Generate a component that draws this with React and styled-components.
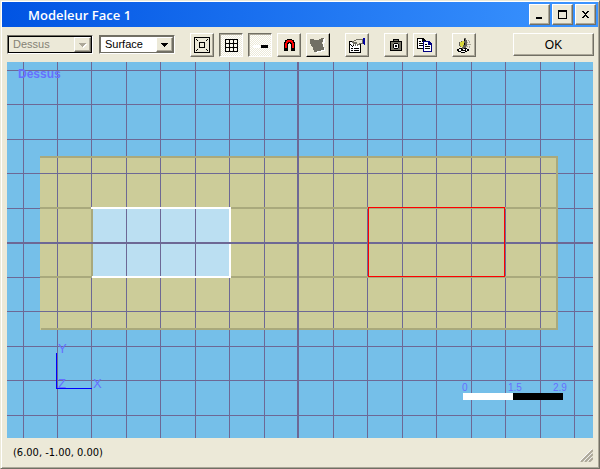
import React from 'react';
import styled, { createGlobalStyle, css } from 'styled-components';

const Global = createGlobalStyle`
  * { box-sizing: border-box; }
  html, body, #root { height: 100%; margin: 0; }
  body { background: #fff; font: 11px/14px "Liberation Sans", Arial, sans-serif; color: #000; overflow: hidden; }
`;

const raised = css`
  border: 1px solid;
  border-color: #fff #716f64 #716f64 #fff;
  box-shadow: inset -1px -1px #aca899;
`;

const Window = styled.main`
  display: flex;
  flex-direction: column;
  min-height: 100vh;
  background: #ece9d8;
  border: 1px solid;
  border-color: #ece9d8 #716f64 #716f64 #ece9d8;
  box-shadow: inset 1px 1px #fff, inset -1px -1px #aca899;
  padding: 1px;
`;

const TitleBar = styled.header`
  display: flex;
  align-items: center;
  height: 25px;
  padding: 0 2px 0 26px;
  background: linear-gradient(to right, #0054e3, #3c95ff);
`;

const Title = styled.h1`
  flex: 1;
  margin: 0;
  color: #fff;
  font: 600 13px/16px "Open Sans", "Noto Sans", sans-serif;
`;

const CaptionButtons = styled.div`
  display: flex;
  gap: 2px;
`;

const CaptionButton = styled.button`
  ${raised}
  width: 21px;
  height: 21px;
  padding: 0;
  background: #ece9d8;
  svg { display: block; margin: auto; }
`;

const Toolbar = styled.div`
  display: flex;
  align-items: center;
  justify-content: space-between;
  height: 35px;
  padding: 0 4px 0 5px;
`;

const Tools = styled.div`
  display: flex;
  align-items: center;
  gap: 15px;
`;

const Group = styled.div`
  display: flex;
  gap: ${p => p.$gap || 5}px;
`;

const Combo = styled.div`
  display: grid;
  grid-template-columns: 1fr 17px;
  width: ${p => p.$width}px;
  height: 19px;
  border: 1px solid;
  border-color: #716f64 #fff #fff #716f64;
  box-shadow: inset 1px 1px ${p => (p.$off ? '#000' : '#716f64')}, inset -1px -1px ${p => (p.$off ? '#000' : '#716f64')};
  padding: 1px;
  background: ${p => (p.$off ? '#ece9d8' : '#fff')};
`;

const Select = styled.select`
  grid-area: 1 / 1 / 2 / 3;
  appearance: none;
  min-width: 0;
  border: 0;
  padding: 0 18px 0 4px;
  background: transparent;
  color: #000;
  font: 11px/15px "Liberation Sans", Arial, sans-serif;
  &:disabled { color: #858274; opacity: 1; }
`;

const Drop = styled.span`
  ${raised}
  grid-area: 1 / 2;
  display: grid;
  place-items: center;
  background: #ece9d8;
  pointer-events: none;
`;

const ToolButton = styled.button`
  ${raised}
  display: grid;
  place-items: center;
  width: 24px;
  height: 24px;
  padding: 0;
  background: #ece9d8;
  ${p => p.$dark && css`
    border-color: #fff #000 #000 #fff;
  `}
  ${p => p.$pressed && css`
    border-color: #716f64 #fff #fff #716f64;
    box-shadow: inset 1px 1px #aca899;
    background: repeating-conic-gradient(#fff 0 25%, #ece9d8 0 50%) 0 0 / 2px 2px;
  `}
`;

const OkButton = styled.button`
  ${raised}
  width: 81px;
  height: 23px;
  padding: 0;
  background: #ece9d8;
  font: 12px/16px "Liberation Sans", Arial, sans-serif;
`;

const Viewport = styled.section`
  flex: 1;
  display: grid;
  min-height: 0;
  margin: 0 5px;
  background: #75bfe9;
`;

const Drawing = styled.svg`
  display: block;
  width: 100%;
  height: 100%;
  shape-rendering: crispEdges;
  text { font-family: "Liberation Sans", Arial, sans-serif; fill: #6670ff; }
`;

const StatusBar = styled.footer`
  display: flex;
  align-items: center;
  justify-content: space-between;
  height: 29px;
  padding: 0 5px 0 11px;
  font: 11px/14px "DejaVu Sans Condensed", "DejaVu Sans", sans-serif;
`;

const Grip = styled.svg`
  align-self: flex-end;
  margin-bottom: 5px;
`;

const Icon = ({ children, size = 16 }) => (
  <svg width={size} height={size} viewBox={`0 0 ${size} ${size}`} shapeRendering="crispEdges" aria-hidden="true">{children}</svg>
);

const Arrow = ({ off }) => (
  <Icon size={9}>
    {off && <path d="M2 4h7v1h-1v1h-1v1h-1v1h-1v-1h-1v-1h-1v-1h-1z" fill="#fff" />}
    <path d="M1 3h7v1h-1v1h-1v1h-1v1h-1v-1h-1v-1h-1v-1h-1z" fill={off ? '#aca899' : '#000'} />
  </Icon>
);

const FitIcon = () => (
  <Icon>
    <path d="M0 0h16v16h-16zM1 1v14h14v-14zM5 5h6v6h-6zM6 6v4h4v-4z" fillRule="evenodd" />
    <path d="M2 2h1v1h-1zM3 3h1v1h-1zM13 2h1v1h-1zM12 3h1v1h-1zM2 13h1v1h-1zM3 12h1v1h-1zM13 13h1v1h-1zM12 12h1v1h-1z" />
  </Icon>
);

const GridIcon = () => (
  <Icon>
    <path d="M2 2h13v13h-13zM3 3v3h3v-3zM7 3v3h3v-3zM11 3v3h3v-3zM3 7v3h3v-3zM7 7v3h3v-3zM11 7v3h3v-3zM3 11v3h3v-3zM7 11v3h3v-3zM11 11v3h3v-3z" fillRule="evenodd" />
  </Icon>
);

const ScaleIcon = () => (
  <Icon>
    <path d="M1 8h7v3h-7z" fill="#fff" />
    <path d="M9 8h7v3h-7z" />
  </Icon>
);

const MagnetIcon = () => (
  <Icon>
    <path d="M6 2h5v1h2v2h1v9h-4v-7h-1v-1h-1v1h-1v7h-4v-9h1v-2h2z" />
    <path d="M6 3h5v1h1v2h1v5h-2v-5h-1v-1h-3v1h-1v5h-2v-5h1v-2h1z" fill="#f00" />
  </Icon>
);

const ShapeIcon = () => (
  <Icon>
    <path d="M13 1h2v5h-1v5h1v3h-3v1h-4v1h-2v-3h7z" fill="#fff" />
    <path d="M2 2h2v1h5v-1h2v-1h3v1h-1v3h-1v2h1v3h1v3h-3v1h-4v1h-3v-2h-1v-3h-1v-1h-1v-2h-1v-2h-1v-3h2z" fill="#716f64" />
  </Icon>
);

const PropertiesIcon = () => (
  <svg width="18" height="16" viewBox="0 0 18 16" shapeRendering="crispEdges" aria-hidden="true">
    <path d="M1 4h12v12h-12z" />
    <path d="M2 5h10v10h-10z" fill="#fff" />
    <path d="M2 7h1v1h-1zM3 8h1v1h-1zM5 8h1v1h-1zM4 9h1v1h-1zM3 11h2v1h-2zM6 11h5v1h-5zM3 13h2v1h-2zM6 13h5v1h-5z" />
    <path d="M4 4h2v-1h2v-1h7v5h-3v1h-2v1h-1v-2h-1v2h-1v-2h-1v1h-1v-2h-1z" fill="#716f64" />
    <path d="M8 3h6v3h-3v1h-2v-2h-3v-1h2z" fill="#ece9d8" />
    <path d="M15 1h2v7h-1v-1h-1z" fill="#0000a0" />
  </svg>
);

const CameraIcon = () => (
  <Icon>
    <path d="M5 2h6v2h3v10h-12v-10h3z" />
    <path d="M6 3h4v1h-4zM3 5h10v8h-10z" fill="#777568" />
    <path d="M6 6h4v1h1v4h-1v1h-4v-1h-1v-4h1z" />
    <path d="M6 7h4v4h-4z" fill="#fff" />
    <path d="M7 8h2v2h-2z" />
  </Icon>
);

const CopyIcon = () => (
  <Icon>
    <path d="M0 1h6l3 3v8h-9z" />
    <path d="M1 2h4v3h3v6h-7z" fill="#fff" />
    <path d="M2 4h2v1h-2zM2 6h4v1h-4zM2 8h4v1h-4z" />
    <path d="M6 4h6l3 3v8h-9z" fill="#000080" />
    <path d="M7 5h4v3h3v6h-7z" fill="#fff" />
    <path d="M8 7h2v1h-2zM8 9h5v1h-5zM8 11h5v1h-5z" />
  </Icon>
);

const LampIcon = () => (
  <Icon>
    <path d="M3 11h8v1h2v2h-2v1h-2v1h-4v-1h-3v-1h-1v-2h2z" />
    <path d="M3 12h8v2h-2v1h-4v-1h-2z" fill="#fff" />
    <path d="M5 12h2v1h2v-1h1v2h-5z" />
    <path d="M3 5h2v-1h3v-3h2v2h1v6h-1v2h-2v1h-2v-2h-2v-1h-1z" fill="#636158" />
    <path d="M4 5h2v-1h2v4h-1v2h-2v-1h-1z" fill="#d8d83c" />
    <path d="M8 2h1v2h-1zM8 6h1v2h-1z" />
    <path d="M11 5h1v1h-1zM13 4h1v2h-1zM11 7h4v1h-4zM10 9h2v1h-2zM13 9h1v2h-1zM12 3h1v1h-1z" fill="#aca899" />
  </Icon>
);

const gridX = [16, 50, 84, 119, 153, 188, 222, 257, 326, 360, 395, 429, 464, 498, 533, 567];
const gridY = [8, 42, 77, 111, 146, 215, 249, 284, 318, 353];

const Scene = () => (
  <Drawing viewBox="0 0 586 376" preserveAspectRatio="xMinYMin slice" role="img" aria-label="Vue de dessus">
    <rect width="586" height="376" fill="#75bfe9" />
    <rect x="33" y="94" width="518" height="174" fill="#cccc99" />
    <g fill="#6d6895">
      {gridX.map(x => <rect key={x} x={x} width="1" height="376" />)}
      {gridY.map(y => <rect key={y} y={y} width="586" height="1" />)}
    </g>
    <path d="M33 94h518v174h-517v-2h515v-170h-516zM33 145h516v2h-516zM33 214h516v2h-516z" fill="#a9a97c" />
    <rect x="84" y="145" width="2" height="71" fill="#a9a97c" />
    <rect x="86" y="147" width="136" height="67" fill="#bbdff2" />
    <path d="M119 147h1v67h-1zM153 147h1v67h-1zM188 147h1v67h-1z" fill="#6d6895" />
    <path d="M84 145h140v71h-139v-2h137v-67h-138z" fill="#fff" />
    <path d="M0 180h586v2h-586zM290 0h2v376h-2z" fill="#6d6895" />
    <path d="M361 145h137v70h-137zM362 146v68h135v-68z" fill="#f00" fillRule="evenodd" />
    <path d="M49 291h1v35h35v1h-36z" fill="#00f" />
    <text x="11" y="16" fontSize="12" fontWeight="bold">Dessus</text>
    <text x="51" y="291" fontSize="13">Y</text>
    <text x="51" y="326" fontSize="13">Z</text>
    <text x="86" y="326" fontSize="13">X</text>
    <text x="455" y="329" fontSize="10">0</text>
    <text x="501" y="329" fontSize="10">1.5</text>
    <text x="546" y="329" fontSize="10">2.9</text>
    <rect x="456" y="331" width="50" height="7" fill="#fff" />
    <rect x="506" y="331" width="50" height="7" />
  </Drawing>
);

export default function App() {
  return (
    <>
      <Global />
      <Window>
        <TitleBar>
          <Title>Modeleur Face 1</Title>
          <CaptionButtons>
            <CaptionButton aria-label="Minimize"><Icon size={13}><path d="M3 9h6v2h-6z" /></Icon></CaptionButton>
            <CaptionButton aria-label="Maximize"><Icon size={13}><path d="M2 2h9v9h-9zM3 4v6h7v-6z" fillRule="evenodd" /></Icon></CaptionButton>
            <CaptionButton aria-label="Close"><Icon size={13}><path d="M3 3h2v1h1v1h1v-1h1v-1h2v1h-1v1h-1v1h-1v1h1v1h1v1h1v1h-2v-1h-1v-1h-1v1h-1v1h-2v-1h1v-1h1v-1h1v-1h-1v-1h-1v-1h-1z" /></Icon></CaptionButton>
          </CaptionButtons>
        </TitleBar>
        <Toolbar>
          <Tools>
            <Group $gap={6}>
              <Combo $width={86} $off>
                <Select aria-label="Vue" disabled><option>Dessus</option></Select>
                <Drop><Arrow off /></Drop>
              </Combo>
              <Combo $width={76}>
                <Select aria-label="Mode"><option>Surface</option></Select>
                <Drop><Arrow /></Drop>
              </Combo>
            </Group>
            <Group>
              <ToolButton aria-label="Zoom étendu"><FitIcon /></ToolButton>
              <ToolButton aria-label="Grille" aria-pressed="true" $pressed><GridIcon /></ToolButton>
              <ToolButton aria-label="Échelle" aria-pressed="true" $pressed><ScaleIcon /></ToolButton>
              <ToolButton aria-label="Magnétisme"><MagnetIcon /></ToolButton>
              <ToolButton aria-label="Forme" $dark><ShapeIcon /></ToolButton>
            </Group>
            <ToolButton aria-label="Propriétés"><PropertiesIcon /></ToolButton>
            <Group>
              <ToolButton aria-label="Capture"><CameraIcon /></ToolButton>
              <ToolButton aria-label="Copier"><CopyIcon /></ToolButton>
            </Group>
            <ToolButton aria-label="Éclairage"><LampIcon /></ToolButton>
          </Tools>
          <OkButton>OK</OkButton>
        </Toolbar>
        <Viewport><Scene /></Viewport>
        <StatusBar>
          <span>(6.00, -1.00, 0.00)</span>
          <Grip width="13" height="13" viewBox="0 0 13 13" aria-hidden="true">
            <path d="M0 12L12 0M4 12L12 4M8 12L12 8" stroke="#fff" />
            <path d="M1 13L13 1M5 13L13 5M9 13L13 9" stroke="#aca899" strokeWidth="2" />
          </Grip>
        </StatusBar>
      </Window>
    </>
  );
}
